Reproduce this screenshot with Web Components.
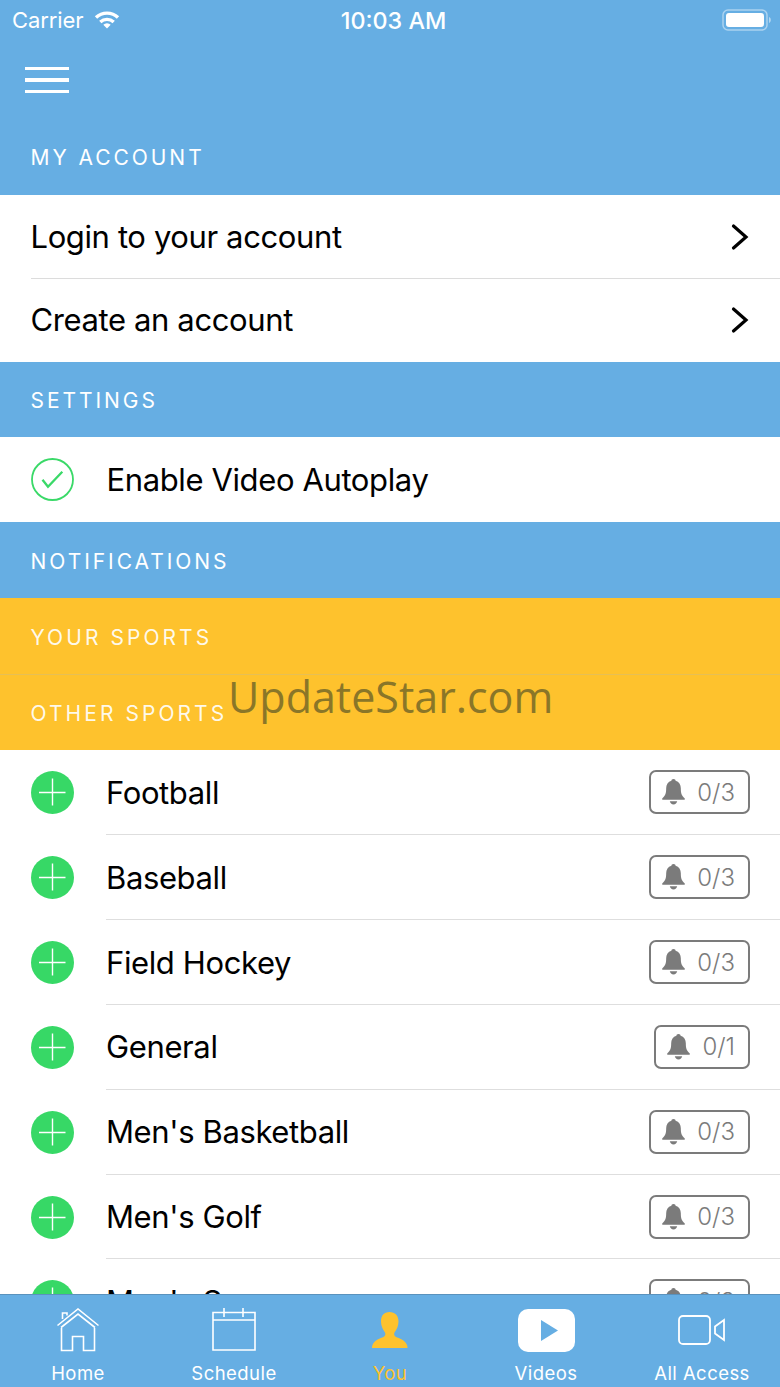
<!DOCTYPE html>
<html><head><meta charset="utf-8"><style>
html,body{margin:0;padding:0;background:#fff}
body{font-family:Inter,"Liberation Sans",sans-serif}
</style></head><body>
<app-shell>
  <status-bar></status-bar>
  <nav-head></nav-head>
  <section-head first>MY ACCOUNT</section-head>
  <link-row>Login to your account</link-row>
  <link-row last>Create an account</link-row>
  <section-head>SETTINGS</section-head>
  <check-row>Enable Video Autoplay</check-row>
  <section-head>NOTIFICATIONS</section-head>
  <section-head yellow>YOUR SPORTS</section-head>
  <section-head yellow line>OTHER SPORTS</section-head>
  <sport-row count="0/3">Football</sport-row>
  <sport-row count="0/3">Baseball</sport-row>
  <sport-row count="0/3">Field Hockey</sport-row>
  <sport-row count="0/1">General</sport-row>
  <sport-row count="0/3">Men's Basketball</sport-row>
  <sport-row count="0/3">Men's Golf</sport-row>
  <sport-row count="0/3">Men's Soccer</sport-row>
  <water-mark slot="over">UpdateStar.com</water-mark>
  <tab-bar slot="tabs"></tab-bar>
</app-shell>
<script>
function def(name,css,html){
  customElements.define(name,class extends HTMLElement{
    connectedCallback(){
      if(this.shadowRoot)return;
      const r=this.attachShadow({mode:'open'});
      r.innerHTML='<style>'+css+'</style>'+(typeof html==='function'?html(this):html);
    }
  });
}
def('app-shell',`:host{display:block;position:relative;width:780px;height:1387px;overflow:hidden;background:#fff;color:#000}
.wrap{display:flex;flex-direction:column;height:100%}
.scroll{flex:1;min-height:0;overflow:hidden}`,
`<div class="wrap"><div class="scroll"><slot></slot></div><slot name="tabs"></slot></div><slot name="over"></slot>`);

def('status-bar',`:host{display:flex;align-items:center;justify-content:space-between;height:40px;background:#66aee3;color:#fff;font-size:22px;padding:0 8px 0 12px;position:relative}
.l{display:flex;align-items:center;gap:11px;letter-spacing:-.1px}
.t{position:absolute;left:7px;right:0;text-align:center;font-weight:500;font-size:23.3px}
svg{display:block;position:relative}`,
`<div class="l"><span>Carrier</span><svg width="26" height="20" viewBox="0 0 26 20" fill="none" stroke="#fff" stroke-width="3.400"><path d="M2 7.500A16 16 0 0 1 24 7.500"/><path d="M6.300 12A10 10 0 0 1 19.700 12"/><path d="M13 18.500L9.300 14.800A5.200 5.200 0 0 1 16.700 14.800z" fill="#fff" stroke="none"/></svg></div>
<div class="t">10:03 AM</div>
<svg width="50" height="24" viewBox="0 0 50 24"><rect x="1" y="2" width="44" height="20" rx="5" fill="none" stroke="#fff" stroke-opacity=".45" stroke-width="1.500"/><rect x="4" y="5" width="38" height="14" rx="3" fill="#fff"/><path d="M47 9v6c1.200-.4 1.800-1.600 1.800-3S48.200 9.400 47 9z" fill="#fff" fill-opacity=".5"/></svg>`);

def('nav-head',`:host{display:flex;align-items:center;height:80px;background:#66aee3;padding-left:25px;box-sizing:border-box}
i{display:block;width:44px;height:3.500px;background:#fff}
div{display:flex;flex-direction:column;gap:8px}`,`<div><i></i><i></i><i></i></div>`);

def('section-head',`:host{display:flex;align-items:center;height:75.6px;background:#66aee3;color:#fff;font-size:21px;letter-spacing:2.950px;padding:2px 0 0 30.5px;box-sizing:border-box}
:host([first]){height:75px;padding-top:0}
:host([yellow]){height:76.3px;padding-top:3px;background:#fec22d;color:rgba(255,255,255,.92);letter-spacing:3.050px}
:host([line]){border-top:1px solid #e6bf55;padding-top:2px}`,`<slot></slot>`);

const chev=`<svg width="20" height="30" viewBox="0 0 20 30"><path d="M4.500 4L17 15 4.500 26" fill="none" stroke="#000" stroke-width="3.200" stroke-linecap="round"/></svg>`;
def('link-row',`:host{display:block;background:#fff;font-size:31px;letter-spacing:-.38px;padding-left:30.5px}
.r{display:flex;align-items:center;justify-content:space-between;height:83px;padding-right:31px;border-bottom:1px solid #dcdcdc}
:host([last]) .r{height:81.7px;padding-bottom:1px;border-bottom:0}
svg{display:block}`,()=>`<div class="r"><span><slot></slot></span>${chev}</div>`);

def('check-row',`:host{display:flex;align-items:center;height:85px;background:#fff;font-size:31px;letter-spacing:-.38px;padding-left:31px;gap:32.500px}
svg{display:block}`,`<svg width="43" height="43" viewBox="0 0 43 43"><circle cx="21.500" cy="21.500" r="20.500" fill="none" stroke="#3ad968" stroke-width="1.800"/><path d="M11.500 21.700l5.500 7L31.300 13.700" fill="none" stroke="#3ad968" stroke-width="2.300"/></svg><span><slot></slot></span>`);

def('sport-row',`:host{display:flex;align-items:stretch;height:84.83px;background:#fff;font-size:31px;letter-spacing:-.38px;padding-left:31px;gap:32px;box-sizing:border-box}
.ic{align-self:center;display:block;flex:none}
.b{flex:1;display:flex;align-items:center;justify-content:space-between;padding-right:30px;border-bottom:1px solid #dedede;box-sizing:border-box}
.badge{display:flex;align-items:center;gap:12px;height:44px;box-sizing:border-box;border:2px solid #7b7b7b;border-radius:7px;padding:0 13px 0 11px;color:#7b7b7b;font-size:24px;font-weight:300;letter-spacing:0}
.badge svg{display:block}`,
e=>`<svg class="ic" width="43" height="43" viewBox="0 0 43 43"><circle cx="21.500" cy="21.500" r="21.500" fill="#37d866"/><path d="M21.500 7.500v27M8 21.500h26.500" stroke="#fff" stroke-width="1.400"/></svg><div class="b"><span><slot></slot></span><div class="badge"><svg width="23" height="26" viewBox="0 0 22 25" preserveAspectRatio="none"><path d="M11 0c1.300 0 2 .8 2 1.700 3.300.9 5 3.600 5 7.300 0 5 .8 7.300 3.600 9.500.5.500.2 1.500-.6 1.500H1c-.8 0-1.100-1-.6-1.500C3.200 16.300 4 14 4 9c0-3.700 1.700-6.400 5-7.300C9 .8 9.700 0 11 0z" fill="#7b7b7b"/><path d="M7.500 21.500h7c-.3 1.900-1.700 3-3.500 3s-3.200-1.100-3.500-3z" fill="#7b7b7b"/></svg><span>${e.getAttribute('count')}</span></div></div>`);

def('water-mark',`:host{position:absolute;left:228px;top:669px;font-family:"Open Sans",sans-serif;font-weight:400;font-size:43px;line-height:56px;color:#8a7628;white-space:nowrap}`,`<slot></slot>`);

def('tab-item',`:host{display:flex;flex-direction:column;align-items:center;flex:0 0 156px;min-width:0;color:#fff;font-size:18.500px;letter-spacing:.45px;white-space:nowrap}
:host([active]){color:#fec22d}
.i{height:44px;margin-top:13px;display:flex;align-items:center;justify-content:center}
.l{margin-top:9px;line-height:24px}`,`<div class="i"><slot name="icon"></slot></div><div class="l"><slot></slot></div>`);

def('tab-bar',`:host{display:flex;height:93px;background:#66aee3;border-top:1px solid #5a92bd;box-sizing:border-box}
svg{display:block}`,
`<tab-item><svg slot="icon" width="44" height="44" viewBox="0 0 44 44" fill="none" stroke="#fff" stroke-width="1.600"><path d="M1.500 17.500L22 1 42.500 17.500M5 19.500L22 6 39 19.500"/><path d="M6.500 11V5H11V7.500"/><path d="M5.500 20V42.500H16.500V28.500H27.500V42.500H38.500V20"/></svg>Home</tab-item>
<tab-item><svg slot="icon" width="44" height="44" viewBox="0 0 44 44" fill="none" stroke="#fff" stroke-width="1.600"><path d="M1 4.500h42V42H1zM1 12h42M12 0v9M31 0v9"/></svg>Schedule</tab-item>
<tab-item active><svg slot="icon" width="36" height="36" viewBox="0 0 36 36"><path d="M17.500 0c5.500 0 9 3.500 9 9.500 0 4.500-2 8.500-4 11-.8 1.500-.3 3.500 1.500 4.500 3 1.500 9 2.500 11 8 .3.800.5 1.800.5 3H0c0-1.200.2-2.200.5-3C2.500 27.500 8.500 26.500 11.500 25c1.800-1 2.300-3 1.500-4.500-2-2.500-4-6.500-4-11C9 3.500 12 0 17.500 0z" fill="#fec22d"/></svg>You</tab-item>
<tab-item><svg slot="icon" width="57" height="43" viewBox="0 0 57 43"><rect width="57" height="43" rx="10" fill="#fff"/><path d="M23 11l17 10.500L23 32z" fill="#66aee3"/></svg>Videos</tab-item>
<tab-item><svg slot="icon" width="48" height="30" viewBox="0 0 48 30" fill="none" stroke="#fff" stroke-width="1.800"><rect x="1" y="1" width="31" height="28" rx="4"/><path d="M46 5v20l-9-6.500v-7z"/></svg>All Access</tab-item>`);
</script></body></html>
